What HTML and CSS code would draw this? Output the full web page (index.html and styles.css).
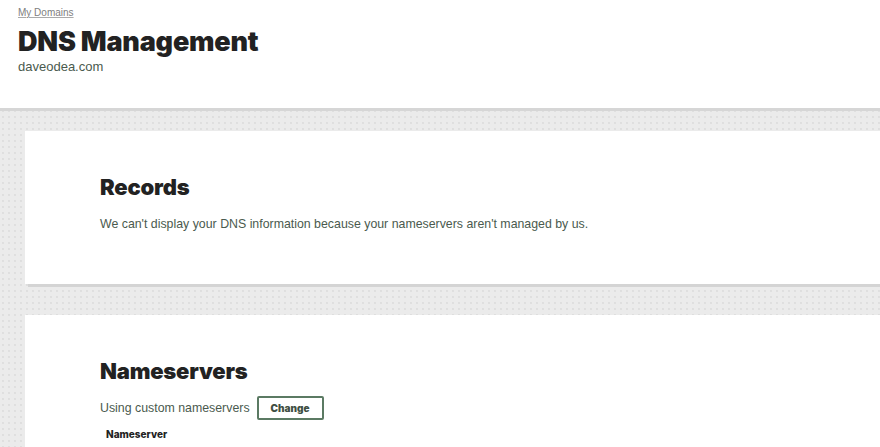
FILE: index.html
```html
<!DOCTYPE html>
<html lang="en">
<head>
<meta charset="utf-8">
<title>DNS Management</title>
<link rel="stylesheet" href="styles.css">
</head>
<body>
<header class="page-header">
  <a class="breadcrumb" href="#">My Domains</a>
  <h1 class="page-title">DNS Management</h1>
  <div class="domain">daveodea.com</div>
</header>
<main class="content">
  <section class="card records">
    <h2 class="card-title">Records</h2>
    <p class="card-text">We can't display your DNS information because your nameservers aren't managed by us.</p>
  </section>
  <section class="card nameservers">
    <h2 class="card-title">Nameservers</h2>
    <div class="ns-row">
      <span class="card-text">Using custom nameservers</span>
      <button class="btn">Change</button>
    </div>
    <div class="ns-label">Nameserver</div>
  </section>
</main>
</body>
</html>
```
FILE: styles.css
```css
html, body {
  margin: 0;
  padding: 0;
  height: 100%;
  overflow: hidden;
}
body {
  font-family: "Liberation Sans", Arial, sans-serif;
  background-color: #ebebeb;
  background-image: radial-gradient(circle, #dedede 0.7px, transparent 1px);
  background-size: 6px 6px;
}
.page-header {
  background: #fff;
  height: 108px;
  box-sizing: border-box;
  padding: 6px 0 0 18px;
  box-shadow: 0 3px 0 #d6d6d6;
  position: relative;
}
.breadcrumb {
  display: block;
  font-size: 10px;
  line-height: 13px;
  color: #808080;
  text-decoration: underline;
  text-decoration-color: #aaa;
}
.page-title {
  margin: 9px 0 0;
  font-family: Inter, "Liberation Sans", sans-serif;
  font-weight: 900;
  font-size: 27px;
  line-height: 28px;
  letter-spacing: -0.2px;
  color: #222;
}
.domain {
  font-size: 13px;
  line-height: 14px;
  color: #4a5a4e;
  margin-top: 4px;
}
.content {
  padding: 23px 0 0 25px;
}
.card {
  background: #fff;
  box-shadow: 3px 3px 0 #d4d4d4;
  padding: 0 0 0 75px;
  margin-bottom: 31px;
}
.card:last-child {
  margin-bottom: 0;
}
.records {
  height: 153px;
  box-sizing: border-box;
  padding-top: 42px;
}
.nameservers {
  height: 132px;
  box-sizing: border-box;
  padding-top: 42px;
}
.card-title {
  margin: 0;
  font-family: Inter, "Liberation Sans", sans-serif;
  font-weight: 900;
  font-size: 22px;
  line-height: 28px;
  letter-spacing: -0.2px;
  color: #222;
}
.card-text {
  margin: 15px 0 0;
  font-size: 12.35px;
  line-height: 16px;
  color: #4a5a4e;
}
.ns-row {
  display: flex;
  align-items: center;
  gap: 7px;
  margin-top: 11px;
}
.ns-row .card-text {
  margin: 0;
}
.btn {
  width: 67px;
  height: 24px;
  border: 2px solid #5b7a63;
  border-radius: 2px;
  background: #fff;
  font-family: Inter, "Liberation Sans", sans-serif;
  font-weight: 900;
  font-size: 10px;
  color: #3f4f43;
  padding: 0;
}
.ns-label {
  margin: 8px 0 0 6px;
  font-family: Inter, "Liberation Sans", sans-serif;
  font-weight: 800;
  font-size: 10px;
  line-height: 12px;
  color: #222;
}
```
